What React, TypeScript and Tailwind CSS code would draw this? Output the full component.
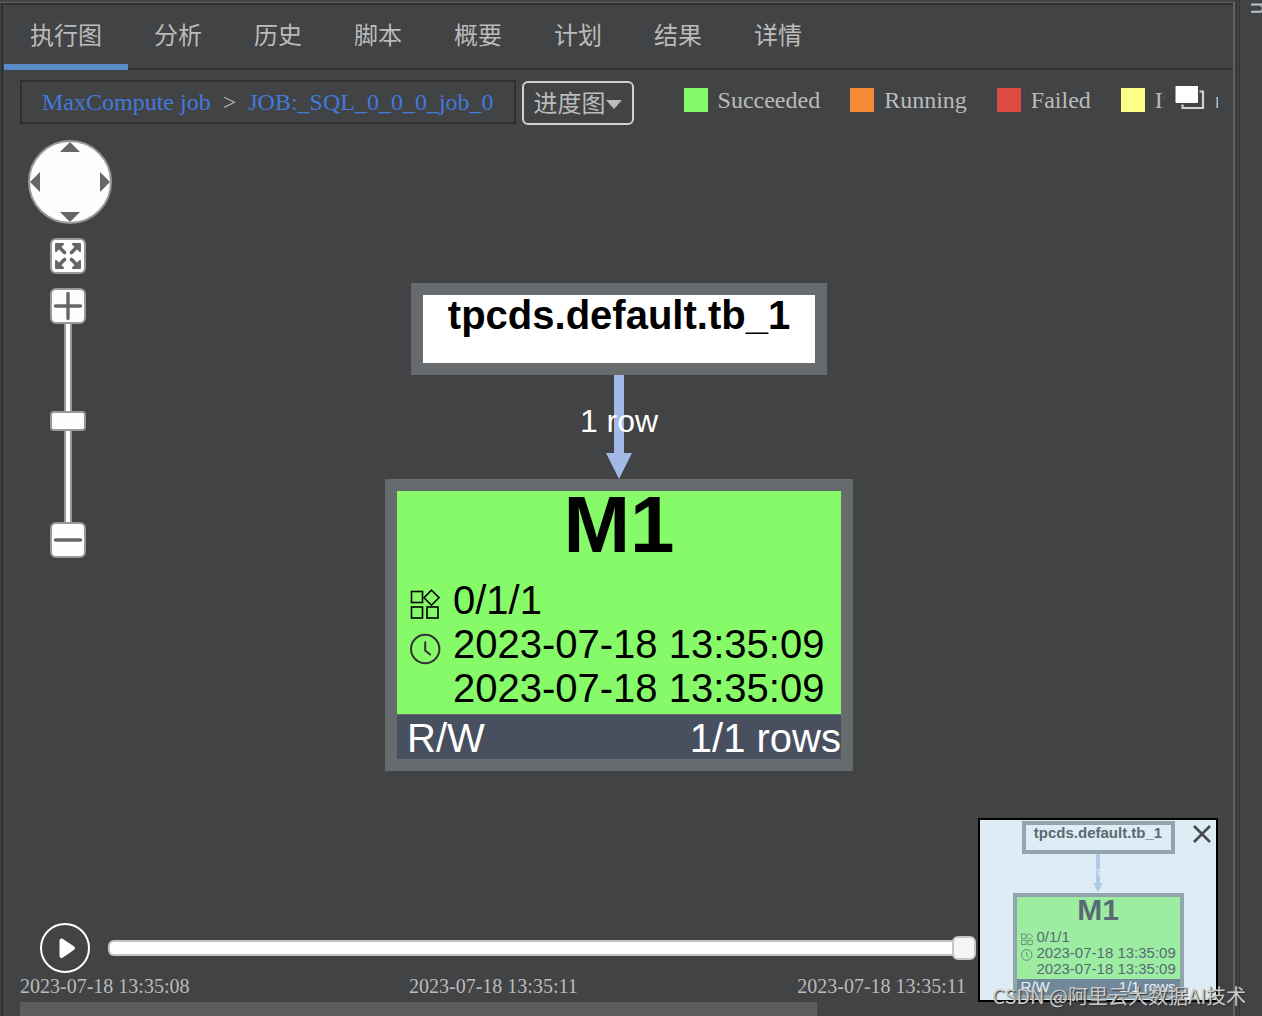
import React, { useState } from 'react';

const tabs = ['执行图', '分析', '历史', '脚本', '概要', '计划', '结果', '详情'];

const legend = [
  { label: 'Succeeded', color: 'bg-[#86fa69]' },
  { label: 'Running', color: 'bg-[#f28a36]' },
  { label: 'Failed', color: 'bg-[#dc4a42]' },
  { label: 'Interrupted', color: 'bg-[#fdfe86]' },
];

const START = '2023-07-18 13:35:09';
const END = '2023-07-18 13:35:09';

const TasksIcon: React.FC<{ className: string }> = ({ className }) => (
  <svg viewBox="0 0 30 30" className={className} fill="none" stroke="currentColor" strokeWidth="1.6" aria-hidden="true">
    <rect x="1.5" y="2.5" width="11" height="11" />
    <rect x="1.5" y="18" width="11" height="11" />
    <rect x="17" y="18" width="11" height="11" />
    <path d="M21.5 1.2 L29 8.7 L21.5 16.2 L14 8.7 Z" />
  </svg>
);

const ClockIcon: React.FC<{ className: string }> = ({ className }) => (
  <svg viewBox="0 0 32 32" className={className} fill="none" stroke="currentColor" strokeWidth="2" aria-hidden="true">
    <circle cx="15.2" cy="16" r="14.2" />
    <path d="M15.2 8.5 V17.5 L20.7 22" />
  </svg>
);

const Tabs: React.FC = () => {
  const [active, setActive] = useState(0);

  return (
    <nav className="flex border-b-2 border-[#303134] pl-px">
      {tabs.map((tab, i) => (
        <button
          key={tab}
          type="button"
          onClick={() => setActive(i)}
          className={`-mb-0.5 border-b-6 px-[26px] pt-[15px] pb-3 text-2xl leading-8 whitespace-nowrap text-[#bbbbbb] ${
            i === active ? 'border-[#5a8bc9]' : 'border-transparent'
          }`}
        >
          {tab}
        </button>
      ))}
    </nav>
  );
};

const Toolbar: React.FC = () => (
  <div className="flex h-[60px] items-center pt-1 pr-[15px] pl-[17px] font-['Liberation_Serif','Noto_Sans_CJK_SC',serif] text-2xl leading-7 text-[#bbbbbb]">
    <div className="flex h-11 shrink-0 items-center gap-3 border-2 border-[#2e2f31] px-5 whitespace-nowrap">
      <a href="#job" className="text-[#4279dc]">MaxCompute job</a>
      <span>&gt;</span>
      <a href="#sql" className="text-[#4279dc]">JOB:_SQL_0_0_0_job_0</a>
    </div>
    <div className="relative mt-0.5 ml-1.5 shrink-0">
      <select
        aria-label="视图"
        className="h-11 w-28 appearance-none rounded-md border-2 border-[#d0d0d0] bg-transparent pt-0.5 pl-2.5"
      >
        <option>进度图</option>
      </select>
      <svg viewBox="0 0 16 9" className="pointer-events-none absolute top-[19px] right-3 h-[9px] w-4" fill="#bbbbbb" aria-hidden="true">
        <path d="M0 0 H16 L8 9 Z" />
      </svg>
    </div>
    <div className="relative -mt-1 ml-[50px] min-w-0 flex-1 overflow-hidden">
      <ul className="flex gap-[30px]">
        {legend.map((item) => (
          <li key={item.label} className="flex shrink-0 items-center gap-2.5">
            <span className={`h-6 w-6 ${item.color}`} />
            {item.label}
          </li>
        ))}
      </ul>
      <button type="button" aria-label="Detach" className="absolute top-0 right-0.5 h-full w-[52px] bg-[#424345] pl-[11px]">
        <svg viewBox="0 0 30 28" className="-mt-1 h-7 w-[30px]" aria-hidden="true">
          <path d="M24.5 7.5 H28 V24 H7.5 V20.5" fill="none" stroke="#d0d0d0" strokeWidth="2.2" />
          <rect x="0.5" y="0.5" width="22.500" height="18.500" rx="1" fill="#fff" />
        </svg>
      </button>
    </div>
  </div>
);

const boxButton = 'h-9 w-9 rounded-md border-2 border-[#999999] bg-[#fdfdfd] text-[#666666]';

const ZoomControls: React.FC = () => {
  const [zoom, setZoom] = useState(51);

  return (
    <div className="absolute top-2.5 left-[25px] flex flex-col items-center">
      <svg viewBox="0 0 84 84" className="h-[84px] w-[84px]" role="img" aria-label="Pan">
        <circle cx="42" cy="42" r="41" fill="#fdfdfd" stroke="#999" strokeWidth="2" />
        <g fill="#666">
          <path d="M32 12 H52 L42 2 Z" />
          <path d="M32 72 H52 L42 82 Z" />
          <path d="M12 32 V52 L2 42 Z" />
          <path d="M72 32 V52 L82 42 Z" />
        </g>
      </svg>
      <div className="mr-1 flex flex-col items-center pt-3.5">
        <button type="button" aria-label="Fit" className={`${boxButton} mb-3.5`}>
          <svg viewBox="0 0 32 32" className="h-8 w-8" fill="currentColor" stroke="currentColor" strokeWidth="3.6" strokeLinecap="round" aria-hidden="true">
            <path d="M12.5 12.5 L7 7 M19.5 12.5 L25 7 M12.5 19.5 L7 25 M19.5 19.5 L25 25" />
            <g strokeWidth="2" strokeLinejoin="round">
              <path d="M4 4 H11 L4 11 Z" />
              <path d="M28 4 H21 L28 11 Z" />
              <path d="M4 28 H11 L4 21 Z" />
              <path d="M28 28 H21 L28 21 Z" />
            </g>
          </svg>
        </button>
        <button type="button" aria-label="Zoom in" className={boxButton} onClick={() => setZoom(Math.min(100, zoom + 10))}>
          <svg viewBox="0 0 32 32" className="h-8 w-8" stroke="currentColor" strokeWidth="3.4" strokeLinecap="round" aria-hidden="true">
            <path d="M3.5 16 H28.5 M16 3.5 V28.5" />
          </svg>
        </button>
        <input
          type="range"
          aria-label="Zoom"
          value={zoom}
          onChange={(e) => setZoom(Number(e.target.value))}
          className="h-[198px] w-9 appearance-none bg-transparent [direction:rtl] [writing-mode:vertical-lr] [&::-webkit-slider-runnable-track]:h-full [&::-webkit-slider-runnable-track]:w-2 [&::-webkit-slider-runnable-track]:border-r-2 [&::-webkit-slider-runnable-track]:border-l-2 [&::-webkit-slider-runnable-track]:border-[#999999] [&::-webkit-slider-runnable-track]:bg-white [&::-webkit-slider-thumb]:-ml-4 [&::-webkit-slider-thumb]:h-5 [&::-webkit-slider-thumb]:w-9 [&::-webkit-slider-thumb]:appearance-none [&::-webkit-slider-thumb]:rounded [&::-webkit-slider-thumb]:border-2 [&::-webkit-slider-thumb]:border-[#999999] [&::-webkit-slider-thumb]:bg-[#fdfdfd]"
        />
        <button type="button" aria-label="Zoom out" className={boxButton} onClick={() => setZoom(Math.max(0, zoom - 10))}>
          <svg viewBox="0 0 32 32" className="h-8 w-8" stroke="currentColor" strokeWidth="3.4" strokeLinecap="round" aria-hidden="true">
            <path d="M3.5 16 H28.5" />
          </svg>
        </button>
      </div>
    </div>
  );
};

const Graph: React.FC = () => (
  <div className="flex flex-col items-center pt-[153px] pl-0.5 font-['Liberation_Sans',sans-serif] text-[40px] leading-[44px] whitespace-nowrap">
    <div className="h-[92px] w-[416px] border-12 border-[#686b6d] bg-white text-center leading-10 font-bold text-black">
      tpcds.default.tb_1
    </div>
    <div className="relative h-[104px] w-[78px]">
      <svg viewBox="0 0 26 104" className="mx-auto h-[104px] w-[26px]" fill="#a3b9e8" aria-hidden="true">
        <path d="M8 0 H18 V78 H26 L13 104 L0 78 H8 Z" />
      </svg>
      <span className="absolute inset-0 flex items-center justify-center pb-3 text-[32px] text-white">1 row</span>
    </div>
    <div className="w-[468px] border-12 border-[#686b6d] bg-[#86fa69] text-black">
      <h2 className="pb-[19px] text-center text-[80px] leading-[68px] font-bold">M1</h2>
      <div className="grid grid-cols-[43px_1fr] items-center pb-1 pl-[13px]">
        <TasksIcon className="mt-2 h-[30px] w-[30px]" />
        <span>0/1/1</span>
        <ClockIcon className="mt-2.5 h-8 w-8 text-[#333333]" />
        <span>{START}</span>
        <span className="col-start-2">{END}</span>
      </div>
      <div className="flex h-[45px] items-center justify-between border-t border-[#686b6d] bg-[#485060] pt-px pl-2.5 text-white">
        <span>R/W</span>
        <span>1/1 rows</span>
      </div>
    </div>
  </div>
);

const MiniMap: React.FC = () => (
  <div className="absolute right-[15px] bottom-0 h-[184px] w-[240px] overflow-hidden border-2 border-black bg-[#deedf5]">
    <div className="flex flex-col items-center pt-px font-['Liberation_Sans',sans-serif] text-[15px] leading-4 whitespace-nowrap text-[#5a6a73]">
      <div className="h-[33px] w-[153px] border-4 border-[#92a5ac] text-center font-bold leading-[15px]">tpcds.default.tb_1</div>
      <div className="relative h-[39px] w-10">
        <svg viewBox="0 0 10 39" className="mx-auto h-[39px] w-2.5" fill="#b0cbe8" aria-hidden="true">
          <path d="M3 0 H7 V29 H10 L5 38 L0 29 H3 Z" />
        </svg>
        <span className="absolute inset-0 flex items-center justify-center pb-1 text-xs text-[#e2f0f8]">1 row</span>
      </div>
      <div className="w-[171px] border-4 border-[#92a5ac] bg-[#9ceda2]">
        <div className="pb-1.5 text-center text-[30px] leading-[26px] font-bold">M1</div>
        <div className="grid grid-cols-[16px_1fr] items-center pb-0.5 pl-1">
          <TasksIcon className="mt-1 h-3 w-3" />
          <span>0/1/1</span>
          <ClockIcon className="mt-1 h-3 w-3" />
          <span>{START}</span>
          <span className="col-start-2">{END}</span>
        </div>
        <div className="flex h-4 items-center justify-between bg-[#71879a] px-1 text-[#e8f3f9]">
          <span>R/W</span>
          <span>1/1 rows</span>
        </div>
      </div>
    </div>
    <button type="button" aria-label="Close" className="absolute top-1 right-1 h-5 w-5">
      <svg viewBox="0 0 20 20" className="h-5 w-5" stroke="#45494b" strokeWidth="2.6" aria-hidden="true">
        <path d="M2 2 L18 18 M18 2 L2 18" />
      </svg>
    </button>
  </div>
);

const Player: React.FC = () => {
  const [time, setTime] = useState(100);

  return (
    <div className="pr-[257px] pl-[17px] font-['Liberation_Serif',serif] text-xl leading-[26px] text-[#bbbbbb]">
      <div className="flex items-center gap-[18px] pl-5">
        <button type="button" aria-label="Play" className="h-[50px] w-[50px] shrink-0 rounded-full border-2 border-white">
          <svg viewBox="0 0 46 46" className="h-[46px] w-[46px]" fill="#fff" stroke="#fff" strokeWidth="4" strokeLinejoin="round" aria-hidden="true">
            <path d="M19.5 15.5 V31 L31 23.2 Z" />
          </svg>
        </button>
        <input
          type="range"
          aria-label="Timeline"
          value={time}
          onChange={(e) => setTime(Number(e.target.value))}
          className="h-6 min-w-0 flex-1 appearance-none bg-transparent [&::-webkit-slider-runnable-track]:h-4 [&::-webkit-slider-runnable-track]:rounded-md [&::-webkit-slider-runnable-track]:border-y-2 [&::-webkit-slider-runnable-track]:border-l-2 [&::-webkit-slider-runnable-track]:border-[#c5c5c5] [&::-webkit-slider-runnable-track]:bg-white [&::-webkit-slider-thumb]:-mt-1.5 [&::-webkit-slider-thumb]:h-6 [&::-webkit-slider-thumb]:w-6 [&::-webkit-slider-thumb]:appearance-none [&::-webkit-slider-thumb]:rounded-md [&::-webkit-slider-thumb]:border-2 [&::-webkit-slider-thumb]:border-[#c5c5c5] [&::-webkit-slider-thumb]:bg-[#f6f6f6]"
        />
      </div>
      <div className="flex justify-between pr-2.5 pb-[3px] whitespace-nowrap">
        <span>2023-07-18 13:35:08</span>
        <span>2023-07-18 13:35:11</span>
        <span>2023-07-18 13:35:11</span>
      </div>
    </div>
  );
};

const App: React.FC = () => {
  return (
    <div className="relative flex min-h-screen overflow-hidden bg-[#424345] font-['Liberation_Sans','Noto_Sans_CJK_SC',sans-serif]">
      <main className="mt-0.5 flex min-w-0 flex-1 flex-col border-t border-r-2 border-t-[#5f6062] border-r-[#5f6062] pl-px">
        <div className="flex flex-1 flex-col border-t-2 border-l-2 border-[#2f3032]">
          <Tabs />
          <Toolbar />
          <div className="relative flex flex-1 flex-col">
            <div className="flex-1">
              <Graph />
            </div>
            <ZoomControls />
            <Player />
            <MiniMap />
          </div>
          <div className="pl-[17px]">
            <div className="h-3.5 w-[797px] bg-[#5c5d5f]" />
          </div>
        </div>
      </main>
      <aside className="flex w-[27px] pl-px">
        <div className="w-1 shrink-0 border-x border-[#303134]" />
        <span className="ml-2 pt-0.5 text-[22px] leading-5 text-[#bbbbbb] [writing-mode:vertical-rl]">n</span>
      </aside>

      <p className="absolute right-4 bottom-1 font-['Noto_Sans_CJK_SC',sans-serif] text-xl leading-8 whitespace-nowrap text-[#c9c9c9] [text-shadow:1px_1px_1px_#333]">
        CSDN @阿里云大数据AI技术
      </p>
    </div>
  );
};

export default App;
